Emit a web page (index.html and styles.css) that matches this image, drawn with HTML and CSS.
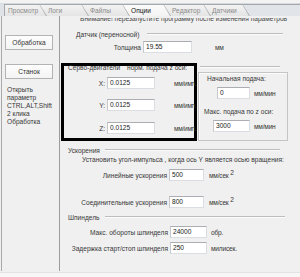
FILE: index.html
```html
<!DOCTYPE html>
<html lang="ru">
<head>
<meta charset="utf-8">
<title>Опции</title>
<link rel="stylesheet" href="styles.css">
</head>
<body>
<div class="win">
  <div class="topbar"></div>
  <div class="tabs">
    <div class="tab first"><div class="face">Просмотр</div></div>
    <div class="tab t-logs"><div class="face">Логи</div></div>
    <div class="tab t-files"><div class="face">Файлы</div></div>
    <div class="tab t-opts active"><div class="face">Опции</div></div>
    <div class="tab t-edit"><div class="face">Редактор</div></div>
    <div class="tab t-sens"><div class="face">Датчики</div></div>
    <div class="tab t-end"><div class="face"></div></div>
  </div>
  <div class="main">
    <aside class="side">
      <div class="btn b1">Обработка</div>
      <div class="btn b2">Станок</div>
      <div class="hint">Открыть<br>параметр<br>CTRL,ALT,Shift<br>2 клика<br>Обработка</div>
    </aside>
    <section class="content">
      <div class="cut"><span>Внимание! перезапустите программу после изменения параметров</span></div>

      <div class="gtitle g-sensor"><span class="gt-text">Датчик (переносной)</span><span class="gline"></span></div>
      <div class="frow r-thick"><span class="lab">Толщина</span><span class="inp">19.55</span><span class="unit">мм</span></div>

      <div class="servo">
        <div class="hl">
          <div class="hl-title"><span class="hl-t1">Серво-двигатели</span><span>норм. подача z оси:</span></div>
          <div class="axis ax-x"><span class="alab">X:</span><span class="inp ainp">0.0125</span><span class="unit aunit">мм/имп.</span></div>
          <div class="axis ax-y"><span class="alab">Y:</span><span class="inp ainp">0.0125</span><span class="unit aunit">мм/имп.</span></div>
          <div class="axis ax-z"><span class="alab">Z:</span><span class="inp ainp">0.0125</span><span class="unit aunit">мм/имп.</span></div>
        </div>
        <div class="feed">
          <div class="feed-line"></div>
          <div class="feed-box">
            <div class="ftitle ft1">Начальная подача:</div>
            <div class="frow2 f1"><span class="inp">0</span><span class="unit">мм/мин</span></div>
            <div class="ftitle ft2">Макс. подача по z оси:</div>
            <div class="frow2 f2"><span class="inp">3000</span><span class="unit">мм/мин</span></div>
          </div>
        </div>
      </div>

      <div class="gtitle g-acc"><span class="gt-text">Ускорения</span><span class="gline"></span></div>
      <div class="note">Установить угол-импульса , когда ось Y является осью вращения:</div>
      <div class="frow r-lin"><span class="lab">Линейные ускорения</span><span class="inp">500</span><span class="unit">мм/сек <sup>2</sup></span></div>
      <div class="frow r-join"><span class="lab">Соединительные ускорения</span><span class="inp">800</span><span class="unit">мм/сек <sup>2</sup></span></div>

      <div class="gtitle g-spin"><span class="gt-text">Шпиндель</span><span class="gline"></span></div>
      <div class="frow r-rpm"><span class="lab">Макс. обороты шпинделя</span><span class="inp">24000</span><span class="unit">обр.</span></div>
      <div class="frow r-delay"><span class="lab">Задержка старт/стоп шпинделя</span><span class="inp">250</span><span class="unit">милисек.</span></div>
    </section>
  </div>
  <div class="bottombar"></div>
</div>
</body>
</html>
```

FILE: styles.css
```css
* { box-sizing: border-box; }
html, body { margin: 0; padding: 0; }
body {
  background: #f0f0f0;
  font-family: "Liberation Sans", Arial, sans-serif;
  font-size: 6.6px;
  color: #383838;
}
.win { width: 300px; height: 277px; overflow: hidden; background: #f0f0f0; }

.topbar { height: 4px; background: #f3f3f3; border-bottom: 1px solid #d6d9dd; }

.tabs {
  display: flex;
  height: 12px;
  padding-left: 4px;
  background: #dfe2e7;
}
.tab {
  height: 12px;
  margin-left: -7px;
  background: #a4a8ad;
  clip-path: polygon(0 0, 100% 0, 100% 100%, 7px 100%);
  flex: none;
}
.tab .face {
  height: 11px;
  margin-top: 1px;
  margin-left: 1px;
  padding-left: 8px;
  background: linear-gradient(#f3f3f3, #e4e4e4);
  clip-path: polygon(0 0, 100% 0, 100% 100%, 7px 100%);
  color: #8a8a8a;
  line-height: 11px;
  white-space: nowrap;
}
.tab.first { margin-left: 0; width: 42px; clip-path: none; }
.tab.first .face { clip-path: none; padding-left: 3px; }
.t-logs { width: 49px; }
.t-files { width: 48px; }
.t-opts { width: 48px; }
.t-edit { width: 47px; }
.t-sens { width: 46px; }
.t-end { width: 60px; }
.t-end .face { background: #e1e4e8; }
.tab.active .face { background: linear-gradient(#fbfbfb, #f3f3f3); color: #111; }

.main { display: flex; height: 256px; }

.side {
  width: 59px;
  margin-left: 1px;
  border-left: 1px solid #a9a9a9;
  border-right: 1px solid #9c9c9c;
  height: 255px;
  padding-top: 19px;
  padding-left: 3px;
}
.btn {
  width: 48px;
  height: 15px;
  border: 1px solid #b3b3b3;
  background: linear-gradient(#fdfdfd, #f4f4f4);
  text-align: center;
  line-height: 13px;
  color: #333;
}
.b2 { margin-top: 14px; }
.hint { margin-top: 7px; margin-left: 2px; line-height: 8px; }

.content { width: 240px; }

.cut { margin-top: 2px; height: 5px; overflow: hidden; padding-left: 20px; }
.cut span { display: block; margin-top: -4px; line-height: 10px; white-space: nowrap; color: #444; }

.gtitle { display: flex; align-items: center; height: 8px; white-space: nowrap; }
.gline { flex: none; height: 2px; border-top: 1px solid #bdbdbd; border-bottom: 1px solid #fcfcfc; }
.g-sensor { margin-top: 7px; padding-left: 16px; }
.g-sensor .gt-text { width: 71px; }
.g-sensor .gline { width: 136px; }
.g-acc { margin-top: 5px; padding-left: 8px; }
.g-acc .gt-text { width: 37px; }
.g-acc .gline { width: 175px; }
.g-spin { margin-top: 5px; padding-left: 8px; }
.g-spin .gt-text { width: 37px; }
.g-spin .gline { width: 180px; }

.inp {
  display: block;
  flex: none;
  height: 12px;
  background: #fff;
  border: 1px solid #dadde2;
  border-top-color: #abadb3;
  border-left-color: #c6c8cc;
  padding-left: 2px;
  line-height: 9px;
  color: #222;
  white-space: nowrap;
}
.unit { white-space: nowrap; letter-spacing: -0.2px; }
.unit sup { font-size: 6.6px; vertical-align: 3px; line-height: 0; }

.frow { display: flex; align-items: center; height: 12px; }
.lab { flex: none; text-align: right; white-space: nowrap; }
.r-thick { margin-top: 3px; }
.r-thick .lab { width: 81px; }
.r-thick .inp { margin-left: 2px; width: 49px; }
.r-thick .unit { margin-left: 23px; }

.servo { display: flex; margin-top: 10px; height: 78px; }
.hl {
  width: 136px;
  height: 78px;
  margin-left: 1px;
  border: 3px solid #000;
}
.hl-title { display: flex; margin-top: -1px; height: 6px; line-height: 6px; padding-left: 4px; white-space: nowrap; }
.hl-t1 { width: 59px; flex: none; }
.axis { display: flex; align-items: center; height: 12px; }
.ax-x { margin-top: 6px; }
.ax-y { margin-top: 10px; }
.ax-z { margin-top: 11px; }
.alab { width: 41px; text-align: right; flex: none; }
.ainp { margin-left: 2px; width: 48px; }
.aunit { margin-left: 19px; letter-spacing: -0.3px; }

.feed { margin-left: 1px; width: 90px; }
.feed-line { margin-top: 3px; margin-left: 2px; width: 80px; height: 2px; border-top: 1px solid #bdbdbd; border-bottom: 1px solid #fcfcfc; }
.feed-box {
  margin-top: 4px;
  width: 90px;
  height: 69px;
  border: 1px solid #c4c4c4;
  box-shadow: inset 1px 1px 0 #fcfcfc;
}
.ftitle { line-height: 8px; height: 8px; white-space: nowrap; }
.ft1 { margin-top: 2px; padding-left: 8px; }
.ft2 { margin-top: 9px; padding-left: 5px; }
.frow2 { display: flex; align-items: center; height: 12px; }
.f1 { margin-top: 4px; padding-left: 18px; }
.f1 .inp { width: 33px; }
.f2 { margin-top: 4px; padding-left: 14px; }
.f2 .inp { width: 37px; }
.frow2 .unit { margin-left: 4px; }

.note { margin-top: 2px; height: 8px; line-height: 8px; padding-left: 22px; white-space: nowrap; }

.r-lin { margin-top: 5px; }
.r-join { margin-top: 15px; }
.r-lin .lab, .r-join .lab { width: 107px; }
.r-lin .inp, .r-join .inp { margin-left: 2px; width: 35px; }
.r-lin .unit, .r-join .unit { margin-left: 5px; }

.r-rpm { margin-top: 5px; }
.r-delay { margin-top: 4px; }
.r-rpm .lab, .r-delay .lab { width: 108px; }
.r-rpm .inp, .r-delay .inp { margin-left: 2px; width: 37px; }
.r-rpm .unit, .r-delay .unit { margin-left: 4px; }

.bottombar { height: 5px; background: #f7f7f7; border-top: 1px solid #e2e2e2; }
```
